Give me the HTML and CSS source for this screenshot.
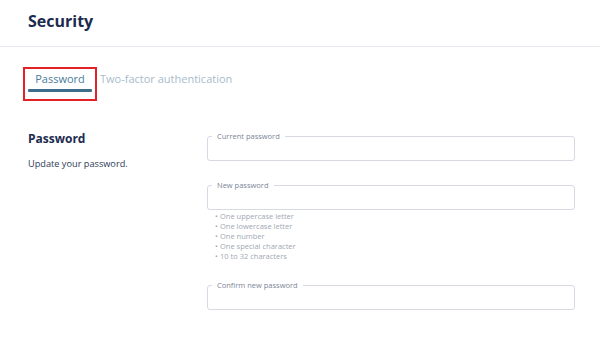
FILE: index.html
```html
<!DOCTYPE html>
<html lang="en">
<head>
<meta charset="utf-8">
<title>Security</title>
<link rel="stylesheet" href="styles.css">
</head>
<body>
<header class="topbar">
  <h1 class="title">Security</h1>
</header>
<nav class="tabs">
  <div class="tab-highlight">
    <div class="tab tab-active">
      <span class="tab-label">Password</span>
      <span class="tab-underline"></span>
    </div>
  </div>
  <div class="tab tab-inactive"><span class="tab-label">Two-factor authentication</span></div>
</nav>
<main class="section">
  <div class="section-intro">
    <h2 class="section-title">Password</h2>
    <p class="section-desc">Update your password.</p>
  </div>
  <div class="form">
    <fieldset class="field">
      <legend class="field-label">Current password</legend>
      <div class="field-input"></div>
    </fieldset>
    <div class="field-group">
      <fieldset class="field">
        <legend class="field-label">New password</legend>
        <div class="field-input"></div>
      </fieldset>
      <ul class="rules">
        <li>One uppercase letter</li>
        <li>One lowercase letter</li>
        <li>One number</li>
        <li>One special character</li>
        <li>10 to 32 characters</li>
      </ul>
    </div>
    <fieldset class="field">
      <legend class="field-label">Confirm new password</legend>
      <div class="field-input"></div>
    </fieldset>
  </div>
</main>
</body>
</html>
```
FILE: styles.css
```css
* { box-sizing: border-box; }
html, body { margin: 0; padding: 0; background: #ffffff; }
body {
  font-family: "Open Sans", "Noto Sans", "Liberation Sans", sans-serif;
  color: #2e3a56;
  width: 600px;
  height: 343px;
  overflow: hidden;
}
.topbar {
  height: 47px;
  padding: 10px 0 0 28px;
  border-bottom: 1px solid #e6eaef;
}
.title {
  margin: 0;
  font-size: 16px;
  line-height: 22px;
  font-weight: 700;
  color: #1d2b4f;
}
.tabs {
  display: flex;
  align-items: flex-start;
  margin: 20px 0 0 23px;
}
.tab-highlight {
  border: 2px solid #e32227;
  padding: 2px 3px 7px;
}
.tab {
  display: flex;
  flex-direction: column;
  align-items: center;
}
.tab-label {
  font-size: 11px;
  line-height: 15px;
}
.tab-active { width: 64px; }
.tab-active .tab-label { color: #4a7b99; }
.tab-underline {
  display: block;
  width: 64px;
  height: 3px;
  margin-top: 3px;
  background: #3e6e8b;
  border-radius: 1px;
}
.tab-inactive {
  margin-left: 3px;
  padding-top: 4px;
}
.tab-inactive .tab-label { color: #a8bccb; }
.section {
  display: grid;
  grid-template-columns: 179px 368px;
  padding: 0 25px 0 28px;
  margin-top: 30px;
}
.section-title {
  margin: 0;
  font-size: 12px;
  line-height: 16px;
  font-weight: 700;
  color: #1d2b4f;
}
.section-desc {
  margin: 10px 0 0;
  font-size: 9.2px;
  line-height: 13px;
  color: #2e3a56;
}
.form {
  display: flex;
  flex-direction: column;
  gap: 19px;
}
.field {
  margin: 0;
  padding: 0 4px;
  border: 1px solid #d7dae3;
  border-radius: 3px;
  min-width: 0;
}
.field-label {
  padding: 0 5px;
  font-size: 7.5px;
  line-height: 10px;
  color: #7c8597;
}
.field-input { height: 19px; }
.rules {
  list-style: none;
  margin: 1px 0 0;
  padding: 0 0 0 8px;
  font-size: 7.5px;
  line-height: 10px;
  color: #a2a8b3;
}
.rules li {
  display: flex;
  height: 10px;
}
.rules li::before {
  content: "\2022";
  width: 5px;
  flex: none;
}
```
